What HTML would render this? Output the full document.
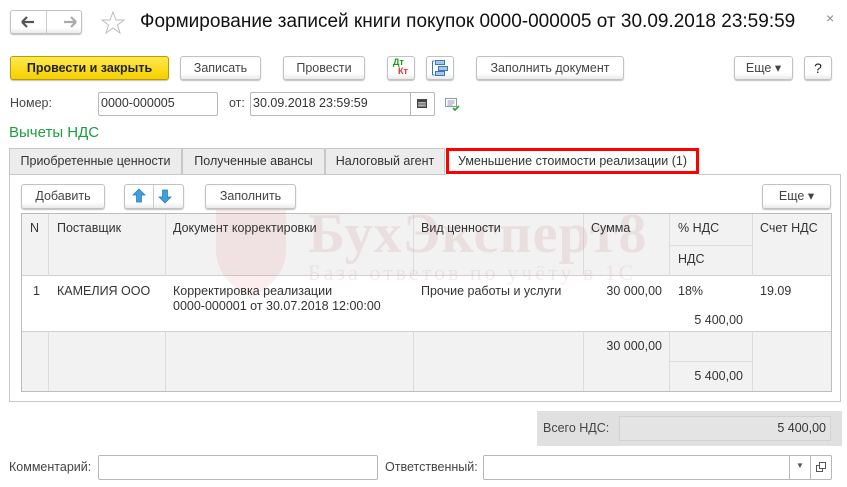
<!DOCTYPE html>
<html><head><meta charset="utf-8"><style>
*{box-sizing:border-box;margin:0;padding:0}
body{width:847px;height:487px;background:#fff;font-family:"Liberation Sans",sans-serif;font-size:12px;color:#333;position:relative;overflow:hidden}
.a{position:absolute}
.btn{position:absolute;border:1px solid #c2c2c2;border-radius:3px;background:linear-gradient(#fff 75%,#ebebeb);box-shadow:0 1px 1px rgba(0,0,0,.25);text-align:center;line-height:23px;font-size:12.5px;color:#444}
.inp{position:absolute;border:1px solid #b8b8b8;border-radius:2px;background:#fff;font-size:12.5px;color:#333;padding-left:2px;line-height:21px}
.tab{position:absolute;top:148px;height:26px;border:1px solid #c8c8c8;border-bottom:none;background:#ececec;line-height:24px;font-size:12.5px;color:#333;text-align:center}
.c{position:absolute;font-size:12.5px;color:#333}
.vl{position:absolute;width:1px;background:#dcdcdc}
</style></head><body>
<!-- nav -->
<div class="btn" style="left:10px;top:10px;width:72px;height:24px"></div>
<div class="a" style="left:46px;top:11px;width:1px;height:22px;background:#ccc"></div>
<svg class="a" style="left:19px;top:15px" width="60" height="14"><path d="M3 7h12M3 7l5-5M3 7l5 5" stroke="#555" stroke-width="2.2" fill="none"/><path d="M57 7H45M57 7l-5-5M57 7l-5 5" stroke="#aaa" stroke-width="2.2" fill="none"/></svg>
<svg class="a" style="left:100px;top:10px" width="26" height="24"><path d="M13 2l3 8h8l-6.5 5 2.5 8-7-5-7 5 2.5-8L2 10h8z" fill="none" stroke="#bbb" stroke-width="1"/></svg>
<div class="a" style="left:140px;top:10px;font-size:19px;color:#111;line-height:24px">Формирование записей книги покупок 0000-000005 от 30.09.2018 23:59:59</div>
<div class="a" style="left:826px;top:10px;font-size:14px;color:#888">×</div>
<!-- toolbar -->
<div class="btn" style="left:10px;top:56px;width:159px;height:24px;background:linear-gradient(#ffe94d,#f5d000);border-color:#b89c00;font-weight:bold;color:#222">Провести и закрыть</div>
<div class="btn" style="left:180px;top:56px;width:81px;height:24px">Записать</div>
<div class="btn" style="left:283px;top:56px;width:82px;height:24px">Провести</div>
<div class="btn" style="left:387px;top:56px;width:28px;height:24px"></div>
<div class="a" style="left:393px;top:57px;font-size:9px;font-weight:bold;color:#1a9a1a;line-height:10px">Дт</div>
<div class="a" style="left:398px;top:66px;font-size:9px;font-weight:bold;color:#e03030;line-height:10px">Кт</div>
<div class="btn" style="left:426px;top:56px;width:28px;height:24px"></div>
<svg class="a" style="left:431px;top:59px" width="18" height="18"><g fill="#a9c8e8" stroke="#3b78b8" stroke-width="1"><rect x="4.5" y="1.5" width="9" height="4"/><rect x="7.5" y="7.5" width="9" height="4"/><rect x="4.5" y="12.5" width="9" height="4"/></g><path d="M1.5 2v14M1.5 2h2M1.5 16h2" stroke="#3b78b8" fill="none"/></svg>
<div class="btn" style="left:476px;top:56px;width:148px;height:24px">Заполнить документ</div>
<div class="btn" style="left:734px;top:56px;width:59px;height:24px">Еще ▾</div>
<div class="btn" style="left:804px;top:56px;width:28px;height:24px;font-size:14px;color:#222">?</div>
<!-- number row -->
<div class="a" style="left:10px;top:96px;font-size:12.5px;color:#444">Номер:</div>
<div class="inp" style="left:98px;top:92px;width:120px;height:24px">0000-000005</div>
<div class="a" style="left:229px;top:96px;font-size:12.5px;color:#444">от:</div>
<div class="inp" style="left:250px;top:92px;width:185px;height:24px">30.09.2018 23:59:59</div>
<div class="a" style="left:410px;top:93px;width:1px;height:22px;background:#b8b8b8"></div>
<svg class="a" style="left:416px;top:97px" width="12" height="12"><rect x="1" y="2" width="10" height="9" fill="#444"/><rect x="2.5" y="5" width="7" height="4.5" fill="#fff"/><path d="M4 5v5M6 5v5M8 5v5M2.5 7h7" stroke="#444" stroke-width=".8"/></svg>
<svg class="a" style="left:444px;top:97px" width="16" height="14"><rect x="1.5" y="1.5" width="11" height="8" fill="#fff" stroke="#8a9aa8"/><path d="M3.5 4h7M3.5 6h7M3.5 8h5" stroke="#8a9aa8"/><path d="M9 11l2 2 4-4" stroke="#2eaa2e" stroke-width="1.8" fill="none"/></svg>
<div class="a" style="left:9px;top:124px;font-size:15px;color:#1b9e3e">Вычеты НДС</div>
<!-- tabs -->
<div class="tab" style="left:9px;width:173px">Приобретенные ценности</div>
<div class="tab" style="left:182px;width:143px">Полученные авансы</div>
<div class="tab" style="left:325px;width:120px">Налоговый агент</div>
<div class="tab" style="left:446px;width:253px;background:#fff;border:3px solid #f00;line-height:21px">Уменьшение стоимости реализации (1)</div>
<div class="a" style="left:9px;top:174px;width:832px;height:228px;border:1px solid #c8c8c8;border-top:none"></div>
<div class="a" style="left:9px;top:174px;width:437px;height:1px;background:#c8c8c8"></div>
<div class="a" style="left:699px;top:174px;width:142px;height:1px;background:#c8c8c8"></div>
<!-- inner toolbar -->
<div class="btn" style="left:21px;top:184px;width:84px;height:25px">Добавить</div>
<div class="btn" style="left:124px;top:184px;width:60px;height:25px"></div>
<div class="a" style="left:153px;top:185px;width:1px;height:23px;background:#ccc"></div>
<svg class="a" style="left:132px;top:188px" width="46" height="16"><path d="M6 1l6 6H8.5v7h-5V7H0z" fill="#3ea0e0" stroke="#1f78b8" stroke-width=".7" transform="translate(1,0)"/><path d="M33 15l6-6h-3.5V2h-5v7H27z" fill="#3ea0e0" stroke="#1f78b8" stroke-width=".7"/></svg>
<div class="btn" style="left:205px;top:184px;width:91px;height:25px">Заполнить</div>
<div class="btn" style="left:762px;top:184px;width:69px;height:25px">Еще ▾</div>
<!-- table -->
<div class="a" style="left:21px;top:213px;width:811px;height:179px;border:1px solid #bdbdbd;background:#fff"></div>
<div class="a" style="left:22px;top:214px;width:809px;height:62px;background:#f2f2f2;border-bottom:1px solid #d0d0d0"></div>
<div class="a" style="left:22px;top:331px;width:809px;height:60px;background:#f2f2f2;border-top:1px solid #d0d0d0"></div>
<div class="vl" style="left:48px;top:214px;height:62px"></div><div class="vl" style="left:48px;top:331px;height:60px"></div>
<div class="vl" style="left:165px;top:214px;height:62px"></div><div class="vl" style="left:165px;top:331px;height:60px"></div>
<div class="vl" style="left:413px;top:214px;height:62px"></div><div class="vl" style="left:413px;top:331px;height:60px"></div>
<div class="vl" style="left:583px;top:214px;height:62px"></div><div class="vl" style="left:583px;top:331px;height:60px"></div>
<div class="vl" style="left:669px;top:214px;height:62px"></div><div class="vl" style="left:669px;top:331px;height:60px"></div>
<div class="vl" style="left:752px;top:214px;height:62px"></div><div class="vl" style="left:752px;top:331px;height:60px"></div>
<div class="a" style="left:669px;top:245px;width:83px;height:1px;background:#dcdcdc"></div>
<div class="a" style="left:669px;top:361px;width:83px;height:1px;background:#dcdcdc"></div>
<!-- watermark -->
<svg class="a" style="left:212px;top:208px" width="80" height="92"><path d="M4 2h70v40c0 25-20 40-35 48C24 82 4 67 4 42z" fill="#d44" opacity=".09"/></svg>
<div class="a" style="left:308px;top:202px;font-family:'Liberation Serif',serif;font-size:56px;font-weight:bold;color:#c99;opacity:.2;letter-spacing:1px">БухЭксперт8</div>
<div class="a" style="left:308px;top:260px;font-family:'Liberation Serif',serif;font-size:22px;color:#c99;opacity:.18;letter-spacing:3px">База ответов по учёту в 1С</div>
<div class="c" style="left:30px;top:221px">N</div>
<div class="c" style="left:57px;top:221px">Поставщик</div>
<div class="c" style="left:173px;top:221px">Документ корректировки</div>
<div class="c" style="left:421px;top:221px">Вид ценности</div>
<div class="c" style="left:591px;top:221px">Сумма</div>
<div class="c" style="left:678px;top:221px">% НДС</div>
<div class="c" style="left:678px;top:252px">НДС</div>
<div class="c" style="left:760px;top:221px">Счет НДС</div>
<div class="c" style="left:33px;top:284px">1</div>
<div class="c" style="left:57px;top:284px">КАМЕЛИЯ ООО</div>
<div class="c" style="left:173px;top:284px;line-height:15px">Корректировка реализации<br>0000-000001 от 30.07.2018 12:00:00</div>
<div class="c" style="left:421px;top:284px">Прочие работы и услуги</div>
<div class="c" style="left:583px;top:284px;width:79px;text-align:right">30 000,00</div>
<div class="c" style="left:678px;top:284px">18%</div>
<div class="c" style="left:669px;top:313px;width:74px;text-align:right">5 400,00</div>
<div class="c" style="left:760px;top:284px">19.09</div>
<div class="c" style="left:583px;top:339px;width:79px;text-align:right">30 000,00</div>
<div class="c" style="left:669px;top:369px;width:74px;text-align:right">5 400,00</div>
<!-- total -->
<div class="a" style="left:537px;top:411px;width:305px;height:35px;background:#e0e0e0"></div>
<div class="a" style="left:543px;top:421px;font-size:12.5px;color:#444">Всего НДС:</div>
<div class="a" style="left:619px;top:416px;width:212px;height:25px;border:1px solid #d2d2d2;background:#e4e4e4;text-align:right;padding-right:4px;line-height:23px;font-size:12.5px">5 400,00</div>
<!-- comments -->
<div class="a" style="left:9px;top:460px;font-size:12.5px;color:#444">Комментарий:</div>
<div class="inp" style="left:98px;top:455px;width:280px;height:25px"></div>
<div class="a" style="left:385px;top:460px;font-size:12.5px;color:#444">Ответственный:</div>
<div class="inp" style="left:483px;top:455px;width:349px;height:25px"></div>
<div class="a" style="left:789px;top:456px;width:1px;height:23px;background:#b8b8b8"></div>
<div class="a" style="left:810px;top:456px;width:1px;height:23px;background:#b8b8b8"></div>
<div class="a" style="left:796px;top:461px;font-size:8px;color:#555">▼</div>
<svg class="a" style="left:815px;top:461px" width="12" height="12"><rect x="1.5" y="4.5" width="6" height="6" fill="none" stroke="#555"/><rect x="4.5" y="1.5" width="6" height="6" fill="#fff" stroke="#555"/></svg>
</body></html>
